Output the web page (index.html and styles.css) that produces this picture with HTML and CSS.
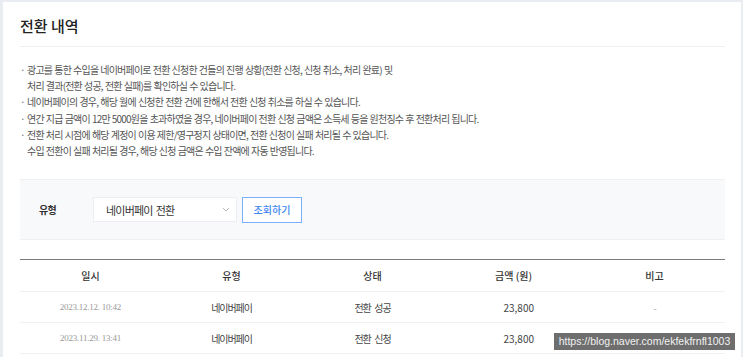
FILE: index.html
```html
<!DOCTYPE html>
<html>
<head>
  <title>전환 내역</title>
  <link rel="stylesheet" href="styles.css">
</head>
<body>

  <div class="panel">
    <h2 class="title">전환 내역</h2>

    <ul class="notice">
      <li>광고를 통한 수입을 네이버페이로 전환 신청한 건들의 진행 상황(전환 신청, 신청 취소, 처리 완료) 및<br>처리 결과(전환 성공, 전환 실패)를 확인하실 수 있습니다.</li>
      <li>네이버페이의 경우, 해당 월에 신청한 전환 건에 한해서 전환 신청 취소를 하실 수 있습니다.</li>
      <li>연간 지급 금액이 12만 5000원을 초과하였을 경우, 네이버페이 전환 신청 금액은 소득세 등을 원천징수 후 전환처리 됩니다.</li>
      <li>전환 처리 시점에 해당 계정이 이용 제한/영구정지 상태이면, 전환 신청이 실패 처리될 수 있습니다.<br>수입 전환이 실패 처리될 경우, 해당 신청 금액은 수입 잔액에 자동 반영됩니다.</li>
    </ul>

    <div class="filter">
      <span class="filter-label">유형</span>
      <div class="select">
        <span>네이버페이 전환</span>
        <svg width="8" height="5" viewBox="0 0 8 5"><path d="M1 1l3 3 3-3" fill="none" stroke="#b5b9bf" stroke-width="1"/></svg>
      </div>
      <button class="search-btn">조회하기</button>
    </div>

    <table class="history">
      <thead>
        <tr>
          <th>일시</th>
          <th>유형</th>
          <th>상태</th>
          <th>금액 (원)</th>
          <th>비고</th>
        </tr>
      </thead>
      <tbody>
        <tr>
          <td class="date">2023.12.12. 10:42</td>
          <td>네이버페이</td>
          <td>전환 성공</td>
          <td class="amount">23,800</td>
          <td class="note">-</td>
        </tr>
        <tr>
          <td class="date">2023.11.29. 13:41</td>
          <td>네이버페이</td>
          <td>전환 신청</td>
          <td class="amount">23,800</td>
          <td class="note">-</td>
        </tr>
      </tbody>
    </table>
  </div>

  <div class="watermark">https://blog.naver.com/ekfekfrnfl1003</div>

</body>
</html>
```

FILE: styles.css
```css
body {
  margin: 0;
  background-color: #e9ecf0;
  font-family: "Noto Sans CJK KR", "Noto Sans", sans-serif;
  color: #333;
  height: 357px;
  overflow: hidden;
}

.panel {
  background-color: #fff;
  margin: 2px 2px 0 3px;
  padding: 0 16px 0 17px;
  height: 355px;
}

.title {
  margin: 0;
  padding: 13px 0 9px;
  font-size: 15px;
  line-height: 22px;
  font-weight: 500;
  color: #222;
  border-bottom: 1px solid #eeeff1;
}

.notice {
  list-style: none;
  margin: 15px 0 0;
  padding: 0;
  font-size: 10px;
  line-height: 16.2px;
  letter-spacing: -0.8px;
  word-spacing: 0.6px;
  color: #555;
}

.notice li {
  position: relative;
  padding-left: 7px;
}

.notice li::before {
  content: "·";
  position: absolute;
  left: 0;
  color: #777;
}

.filter {
  margin-top: 20px;
  height: 59px;
  background-color: #f8f9fb;
  border-top: 1px solid #eef0f2;
  border-bottom: 1px solid #eef0f2;
  display: flex;
  align-items: center;
  padding-left: 19px;
}

.filter-label {
  width: 54px;
  font-size: 10px;
  letter-spacing: -0.6px;
  font-weight: 700;
  color: #333;
}

.select {
  width: 144px;
  height: 25px;
  box-sizing: border-box;
  background-color: #fff;
  border: 1px solid #eceef1;
  display: flex;
  align-items: center;
  justify-content: space-between;
  padding: 0 6px 0 12px;
  font-size: 11px;
  letter-spacing: -0.8px;
  word-spacing: 1.5px;
  color: #333;
}

.search-btn {
  margin-left: 5px;
  width: 60px;
  height: 26px;
  background-color: #fff;
  border: 1px solid #7bb0ff;
  color: #3b86f0;
  font-family: inherit;
  font-size: 10px;
  font-weight: 500;
  padding: 0;
}

.history {
  margin-top: 19px;
  width: 100%;
  border-collapse: collapse;
  table-layout: fixed;
  border-top: 1px solid #7a7a7a;
}

.history th {
  height: 31px;
  padding: 0;
  font-size: 10px;
  font-weight: 500;
  color: #333;
  border-bottom: 1px solid #f0f1f3;
}

.history td {
  height: 30px;
  padding: 0;
  text-align: center;
  font-size: 10px;
  letter-spacing: -1.1px;
  word-spacing: 2.5px;
  color: #444;
  border-bottom: 1px solid #f0f1f3;
}

.history td.date {
  font-family: "Liberation Serif", serif;
  font-size: 9px;
  letter-spacing: -0.25px;
  word-spacing: 0;
  color: #999;
}

.history td.amount {
  text-align: right;
  padding-right: 50px;
  letter-spacing: 0;
}

.history td.note {
  color: #aaa;
}

.watermark {
  position: absolute;
  left: 554px;
  top: 333px;
  width: 181px;
  height: 17px;
  background-color: #6e6e6e;
  color: #f2f2f2;
  font-family: "Liberation Sans", sans-serif;
  font-size: 10.5px;
  line-height: 17px;
  text-align: center;
}
```
